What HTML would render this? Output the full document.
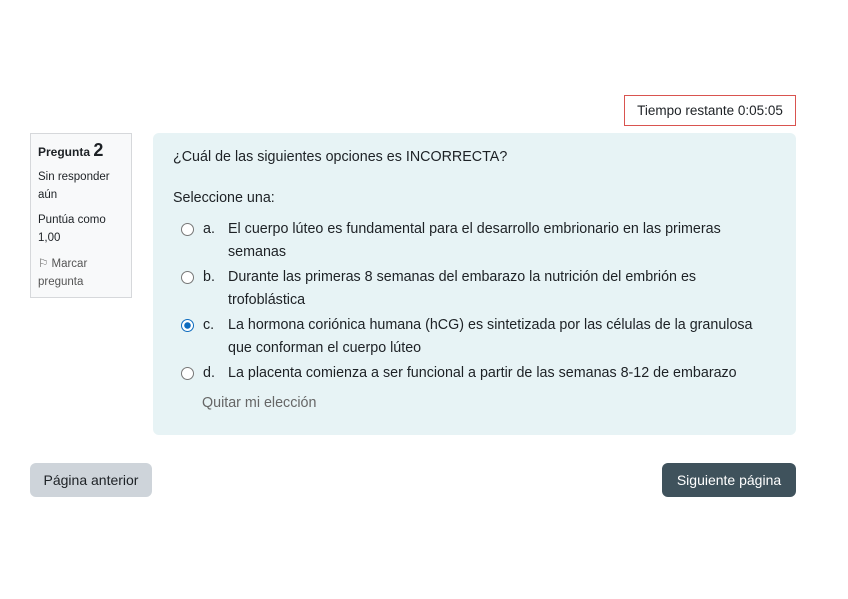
<!DOCTYPE html>
<html><head><meta charset="utf-8"><style>
body{margin:0;width:848px;height:599px;background:#fff;font-family:"Liberation Sans",sans-serif;color:#1d2125;position:relative;overflow:hidden}
.a{position:absolute;white-space:nowrap}
#timer{left:624px;top:95px;width:170px;height:29px;border:1px solid #d9534f;font-size:13.5px;line-height:29px;text-align:center;box-sizing:content-box}
#info{left:30px;top:133px;width:100px;height:163px;border:1px solid #d6d8db;background:#f8f9fa;font-size:11.5px;line-height:17.5px}
#q{left:153px;top:133px;width:643px;height:302px;background:#e7f3f5;border-radius:6px}
.t{font-size:14.3px}
.r{width:11px;height:11px;border:1px solid #777;border-radius:50%;background:#fff}
.btn{top:463px;height:34px;border-radius:6px;font-size:14px;line-height:34px;text-align:center}
</style></head><body>
<div class="a" id="timer">Tiempo restante 0:05:05</div>
<div class="a" id="info">
 <div class="a" style="left:7px;top:8px;font-weight:bold;font-size:12px">Pregunta <span style="font-size:18px">2</span></div>
 <div class="a" style="left:7px;top:35px">Sin responder<br>aún</div>
 <div class="a" style="left:7px;top:78px">Puntúa como<br>1,00</div>
 <div class="a" style="left:7px;top:122px;color:#555">⚐ Marcar<br>pregunta</div>
</div>
<div class="a" id="q">
 <div class="a t" style="left:20px;top:16px">¿Cuál de las siguientes opciones es INCORRECTA?</div>
 <div class="a t" style="left:20px;top:57px">Seleccione una:</div>
 <div class="a r" style="left:28px;top:90px"></div>
 <div class="a t" style="left:50px;top:88px">a.</div>
 <div class="a t" style="left:75px;top:85px;line-height:23px">El cuerpo lúteo es fundamental para el desarrollo embrionario en las primeras<br>semanas</div>
 <div class="a r" style="left:28px;top:138px"></div>
 <div class="a t" style="left:50px;top:136px">b.</div>
 <div class="a t" style="left:75px;top:133px;line-height:23px">Durante las primeras 8 semanas del embarazo la nutrición del embrión es<br>trofoblástica</div>
 <div class="a r" style="left:28px;top:186px;border-color:#0f6cbf;background:radial-gradient(circle,#0f6cbf 0 3px,#fff 3.5px)"></div>
 <div class="a t" style="left:50px;top:184px">c.</div>
 <div class="a t" style="left:75px;top:181px;line-height:23px">La hormona coriónica humana (hCG) es sintetizada por las células de la granulosa<br>que conforman el cuerpo lúteo</div>
 <div class="a r" style="left:28px;top:234px"></div>
 <div class="a t" style="left:50px;top:232px">d.</div>
 <div class="a t" style="left:75px;top:232px">La placenta comienza a ser funcional a partir de las semanas 8-12 de embarazo</div>
 <div class="a t" style="left:49px;top:262px;color:#666">Quitar mi elección</div>
</div>
<div class="a btn" style="left:30px;width:122px;background:#ced4da">Página anterior</div>
<div class="a btn" style="left:662px;width:134px;background:#3f525c;color:#fff">Siguiente página</div>
</body></html>
